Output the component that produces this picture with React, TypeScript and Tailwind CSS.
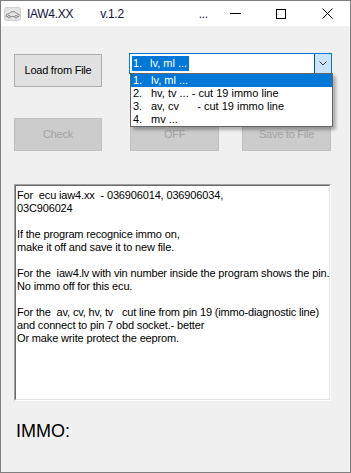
import React from "react";

const ITEMS = [
  { n: "1.", t: "lv, ml ..." },
  { n: "2.", t: "hv, tv ... - cut 19 immo line" },
  { n: "3.", t: "av, cv      - cut 19 immo line" },
  { n: "4.", t: "mv ..." },
];

const INFO = [
  "For  ecu iaw4.xx  - 036906014, 036906034,",
  "03C906024",
  "",
  "If the program recognice immo on,",
  "make it off and save it to new file.",
  "",
  "For the  iaw4.lv with vin number inside the program shows the pin.",
  "No immo off for this ecu.",
  "",
  "For the  av, cv, hv, tv   cut line from pin 19 (immo-diagnostic line)",
  "and connect to pin 7 obd socket.- better",
  "Or make write protect the eeprom.",
];

function CarIcon() {
  return (
    <svg width="17" height="14" viewBox="0 0 17 14">
      <rect x="0.5" y="0.5" width="16" height="13" rx="2" fill="#e4e4e4" stroke="#d0d0d0" />
      <path
        d="M2 9.5 L2.5 7.5 L5 6.8 L7 4.8 L11 4.8 L13 6.8 L15 7.4 L15 9.5 Z"
        fill="none"
        stroke="#8a8a8a"
        strokeWidth="1"
      />
      <circle cx="5" cy="9.8" r="1.3" fill="#e4e4e4" stroke="#8a8a8a" />
      <circle cx="12" cy="9.8" r="1.3" fill="#e4e4e4" stroke="#8a8a8a" />
    </svg>
  );
}

function Btn({ label, disabled, w }: { label: string; disabled?: boolean; w: string }) {
  return (
    <div
      className={`${w} h-[33px] flex items-center justify-center border text-[11px] tracking-[-0.25px] ${
        disabled ? "bg-[#cccccc] border-[#bfbfbf] text-[#a3a3a3]" : "bg-[#e1e1e1] border-[#adadad] text-black"
      }`}
    >
      {label}
    </div>
  );
}

export default function App() {
  return (
    <div className="w-[351px] h-[473px] border border-[#7f7f7f] bg-[#f0f0f0] flex flex-col font-['Liberation_Sans',Arial,sans-serif] overflow-hidden">
      {/* title bar */}
      <div className="h-[25px] bg-white flex items-center shrink-0 text-[12px] text-[#12123e] tracking-[-0.3px]">
        <div className="ml-[3px] mr-[6px] flex items-center">
          <CarIcon />
        </div>
        <span>IAW4.XX</span>
        <span className="ml-[27px]">v.1.2</span>
        <span className="ml-[75px]">...</span>
        <div className="ml-auto flex items-center h-full">
          <div className="w-[46px] h-full flex items-center justify-center">
            <div className="w-[11px] h-px bg-black" />
          </div>
          <div className="w-[46px] h-full flex items-center justify-center">
            <div className="w-[10px] h-[10px] border border-black" />
          </div>
          <div className="w-[46px] h-full flex items-center justify-center">
            <svg width="11" height="11" viewBox="0 0 11 11">
              <path d="M0.5 0.5 L10.5 10.5 M10.5 0.5 L0.5 10.5" stroke="#000" strokeWidth="1" />
            </svg>
          </div>
        </div>
      </div>

      {/* body */}
      <div className="flex flex-col pl-[13px]">
        <div className="relative flex items-start pt-[27px]">
          <div className="mt-[1px]">
            <Btn label="Load from File" w="w-[88px]" />
          </div>
          <div className="ml-[27px] w-[203px] h-[21px] bg-white border border-[#0078d7] flex items-stretch">
            <div className="flex-1 flex items-center pl-[2px]">
              <div className="h-[15px] bg-[#0078d7] text-white text-[11px] leading-[15px] flex whitespace-pre pr-[2px]">
                <span className="w-[18px] pl-[1px]">1.</span>
                <span>lv, ml ...</span>
              </div>
            </div>
            <div className="w-[17px] bg-[#cce4f7] border-l border-[#005499] flex items-center justify-center">
              <svg width="8" height="5" viewBox="0 0 8 5">
                <path d="M0.5 0.5 L4 4 L7.5 0.5" fill="none" stroke="#3c3c3c" strokeWidth="1" />
              </svg>
            </div>
          </div>

          {/* dropdown list */}
          <div className="absolute left-[116px] top-[47px] w-[203px] bg-white border border-[#646464] shadow-[3px_3px_3px_rgba(0,0,0,0.28)] z-10 py-0">
            {ITEMS.map((it, i) => (
              <div
                key={it.n}
                className={`h-[13px] leading-[13px] text-[11px] flex whitespace-pre pl-[2px] ${
                  i === 0 ? "bg-[#0078d7] text-white" : "text-black"
                }`}
              >
                <span className="w-[18px]">{it.n}</span>
                <span>{it.t}</span>
              </div>
            ))}
          </div>
        </div>

        <div className="flex mt-[31px]">
          <Btn label="Check" disabled w="w-[88px]" />
          <div className="ml-[28px]">
            <Btn label="OFF" disabled w="w-[89px]" />
          </div>
          <div className="ml-[23px]">
            <Btn label="Save to File" disabled w="w-[89px]" />
          </div>
        </div>

        <div className="mt-[33px] w-[317px] h-[217px] border border-t-[#a0a0a0] border-l-[#a0a0a0] border-r-white border-b-white">
          <div className="w-full h-full bg-white border border-t-[#696969] border-l-[#696969] border-r-[#e3e3e3] border-b-[#e3e3e3] pl-[1px] pt-[3px]">
            {INFO.map((l, i) => (
              <div key={i} className="h-[13px] leading-[13px] text-[11px] text-black whitespace-pre tracking-[-0.15px]">
                {l}
              </div>
            ))}
          </div>
        </div>

        <div className="mt-[20px] pl-[2px] text-[18px] leading-[21px] text-black">IMMO:</div>
      </div>
    </div>
  );
}
